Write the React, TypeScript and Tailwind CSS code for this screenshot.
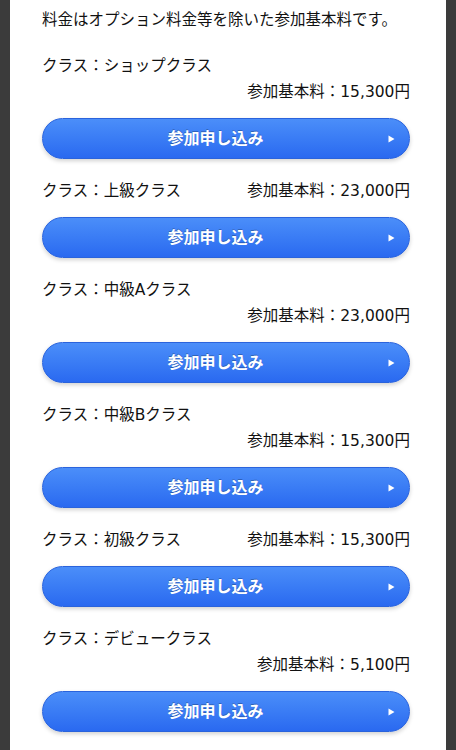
const classes = [
  { name: 'クラス：ショップクラス', fee: '15,300', inline: false },
  { name: 'クラス：上級クラス', fee: '23,000', inline: true },
  { name: 'クラス：中級Aクラス', fee: '23,000', inline: false },
  { name: 'クラス：中級Bクラス', fee: '15,300', inline: false },
  { name: 'クラス：初級クラス', fee: '15,300', inline: true },
  { name: 'クラス：デビュークラス', fee: '5,100', inline: false },
];

function EntryButton() {
  return (
    <button className="relative mt-[13px] flex h-[41px] w-full items-center justify-center rounded-full border border-[#2a63dc] bg-gradient-to-b from-[#4b8ef9] to-[#2a69f0] pr-[21px] text-[16px] font-bold text-white shadow-[0_2px_4px_rgba(0,0,0,0.18)] [text-shadow:0_-1px_0_rgba(0,0,0,0.25)]">
      参加申し込み
      <svg className="absolute right-[14px] top-1/2 -translate-y-1/2" width="7" height="8" viewBox="0 0 7 8">
        <path d="M0.5 0.5 L6.5 4 L0.5 7.5 Z" fill="#ffffff" />
      </svg>
    </button>
  );
}

export default function App() {
  return (
    <div
      className="min-h-[750px] bg-[#3b3b3b] px-[10px]"
      style={{ fontFamily: '"DejaVu Sans", "Noto Sans CJK JP", sans-serif' }}
    >
      <div className="min-h-[750px] bg-white pl-[32px] pr-[36px] pt-[7px] text-[15.5px] leading-[26px] text-[#111]">
        <p>料金はオプション料金等を除いた参加基本料です。</p>
        <div className="mt-[20px] flex flex-col">
          {classes.map((c) => (
            <div key={c.name} className="mb-[19px]">
              {c.inline ? (
                <div className="flex justify-between">
                  <span>{c.name}</span>
                  <span>参加基本料：{c.fee}円</span>
                </div>
              ) : (
                <>
                  <div>{c.name}</div>
                  <div className="text-right">参加基本料：{c.fee}円</div>
                </>
              )}
              <EntryButton />
            </div>
          ))}
        </div>
      </div>
    </div>
  );
}
